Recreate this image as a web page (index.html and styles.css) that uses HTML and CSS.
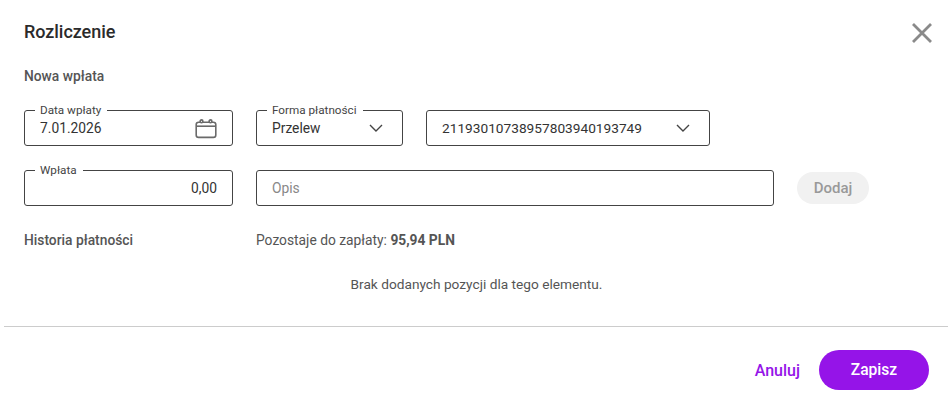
FILE: index.html
```html
<!DOCTYPE html>
<html lang="pl">
<head>
<meta charset="utf-8">
<title>Rozliczenie</title>
<link rel="stylesheet" href="styles.css">
</head>
<body>
<div class="dialog">
  <header class="head">
    <h1 class="title">Rozliczenie</h1>
    <button class="close" aria-label="Zamknij">
      <svg width="20" height="20" viewBox="0 0 20 20"><path d="M1 1 19 19M19 1 1 19" fill="none" stroke="#8a8a8a" stroke-width="2.8"/></svg>
    </button>
  </header>
  <h2 class="section">Nowa wpłata</h2>
  <div class="row row-one">
    <div class="field f-date">
      <span class="legend">Data wpłaty</span>
      <span class="value">7.01.2026</span>
      <svg class="cal" width="22" height="20" viewBox="0 0 22 20"><g fill="none" stroke="#6a6a6a" stroke-width="1.6"><rect x="1.2" y="3.2" width="19.6" height="15.2" rx="2.4"/><path d="M1.2 7.2H20.800"/><circle cx="6.500" cy="2.300" r="1.400" fill="#fff"/><circle cx="15.500" cy="2.300" r="1.400" fill="#fff"/></g></svg>
    </div>
    <div class="field f-form">
      <span class="legend">Forma płatności</span>
      <span class="value">Przelew</span>
      <svg class="chev" width="14" height="8" viewBox="0 0 14 8"><path d="M1 1 7 7 13 1" fill="none" stroke="#444" stroke-width="1.400"/></svg>
    </div>
    <div class="field f-acc">
      <span class="value">21193010738957803940193749</span>
      <svg class="chev" width="14" height="8" viewBox="0 0 14 8"><path d="M1 1 7 7 13 1" fill="none" stroke="#444" stroke-width="1.400"/></svg>
    </div>
  </div>
  <div class="row row-two">
    <div class="field f-date">
      <span class="legend">Wpłata</span>
      <span class="value amount">0,00</span>
    </div>
    <div class="field f-desc"><span class="value hint">Opis</span></div>
    <button class="add">Dodaj</button>
  </div>
  <div class="history">
    <h2 class="section hist-title">Historia płatności</h2>
    <p class="due">Pozostaje do zapłaty: <b>95,94 PLN</b></p>
  </div>
  <p class="empty">Brak dodanych pozycji dla tego elementu.</p>
  <hr class="rule">
  <footer class="foot">
    <button class="cancel">Anuluj</button>
    <button class="save">Zapisz</button>
  </footer>
</div>
</body>
</html>
```
FILE: styles.css
```css
* { box-sizing: border-box; }
html, body { margin: 0; background: #fff; }
body { width: 951px; height: 405px; overflow: hidden; font-family: Roboto, "Liberation Sans", sans-serif; color: #333; }
.dialog { padding: 0 22px 0 24px; }
button { font-family: inherit; border: 0; background: none; padding: 0; }
.head { display: flex; justify-content: space-between; align-items: center; height: 32px; margin-top: 16px; }
.title { margin: 0; font-size: 18px; font-weight: 500; color: #2b2b2b; line-height: 32px; letter-spacing: -0.05px; }
.close { width: 20px; height: 20px; margin-right: -3px; margin-top: 1px; display: block; }
.close svg { display: block; }
.section { margin: 0; font-size: 13.800px; font-weight: 500; color: #555; line-height: 20px; }
.head + .section { margin-top: 18px; }
.row { display: flex; align-items: center; }
.row-one { margin-top: 24px; }
.row-two { margin-top: 24px; }
.field { position: relative; height: 36px; border: 1px solid #444; border-radius: 3px; display: flex; align-items: center; justify-content: space-between; padding: 0 15px; font-size: 13.800px; background: #fff; }
.f-date { width: 209px; }
.f-form { width: 147px; margin-left: 23px; }
.f-acc { width: 284px; margin-left: 23px; padding-right: 19px; font-size: 13.700px; }
.f-desc { width: 518px; margin-left: 23px; }
.f-form .chev { margin-right: 4px; }
.legend { position: absolute; left: 10px; top: -7px; padding: 0 6px 0 5px; background: #fff; font-size: 11.700px; line-height: 12px; color: #444; }
.value { color: #333; line-height: 20px; }
.amount { margin-left: auto; }
.hint { color: #888; }
.cal { margin-right: 0; margin-top: 1px; }
.add { width: 72px; height: 32px; margin-left: 23px; border-radius: 16px; background: #f1f1f1; color: #999; font-size: 15px; font-weight: 500; }
.history { display: flex; margin-top: 24px; line-height: 20px; }
.hist-title { width: 232px; }
.due { margin: 0; font-size: 13.800px; color: #555; }
.due b { font-weight: 700; }
.empty { margin: 24px 0 0; text-align: center; font-size: 13.700px; line-height: 20px; color: #555; width: 905px; }
.rule { margin: 32px -19px 0 -20px; border: 0; height: 1px; background: #ccc; }
.foot { display: flex; justify-content: flex-end; align-items: center; margin-top: 23px; }
.cancel { color: #9514e8; font-size: 16px; font-weight: 500; margin-right: 19px; }
.save { width: 110px; height: 40px; border-radius: 20px; background: #9514e8; color: #fff; font-size: 15.600px; font-weight: 500; }
```
